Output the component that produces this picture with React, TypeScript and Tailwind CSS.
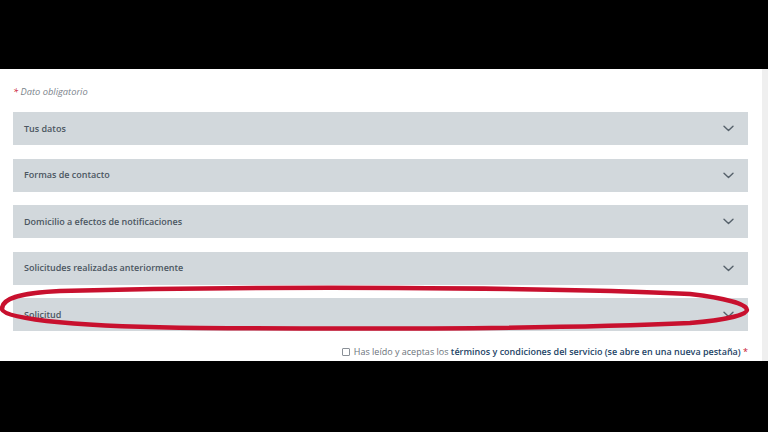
import React from 'react';

const sections = [
  'Tus datos',
  'Formas de contacto',
  'Domicilio a efectos de notificaciones',
  'Solicitudes realizadas anteriormente',
  'Solicitud',
];

const Chevron: React.FC = () => (
  <svg width="11" height="7" viewBox="0 0 11 7" fill="none">
    <path d="M1 1.2l4.5 4.3L10 1.2" stroke="#56616b" strokeWidth="1.4" strokeLinecap="round" strokeLinejoin="round" />
  </svg>
);

export default function App() {
  return (
    <div className="w-[768px] h-[432px] bg-black flex flex-col overflow-hidden" style={{ fontFamily: '"Open Sans", "Noto Sans", sans-serif' }}>
      <div className="h-[69px] shrink-0 bg-black" />

      <div className="relative h-[292px] shrink-0 bg-white flex">
        <div className="flex-1 pl-[13px] pr-[14px]">
          {/* Required note */}
          <p className="mt-[17px] h-[12px] text-[9.3px] leading-[12px] italic text-[#7b848c]">
            <span className="text-[#c8102e]">*</span> Dato obligatorio
          </p>

          {/* Accordion */}
          <div className="mt-[14px] flex flex-col gap-[13.5px]">
            {sections.map((title) => (
              <div key={title} className="h-[33px] bg-[#d2d8dc] flex items-center justify-between pl-[11px] pr-[14px]">
                <span className="text-[9px] font-semibold text-[#4b5661]">{title}</span>
                <Chevron />
              </div>
            ))}
          </div>

          {/* Terms */}
          <div className="mt-[15px] flex items-center justify-end gap-[4px] text-[9px] leading-[12px]">
            <span className="w-[8px] h-[8px] border border-[#8a9097] bg-white rounded-[1px]" />
            <span className="text-[#6b737b]">
              Has leído y aceptas los{' '}
              <span className="font-semibold text-[#1d4466]">términos y condiciones del servicio (se abre en una nueva pestaña)</span>{' '}
              <span className="text-[#c8102e]">*</span>
            </span>
          </div>
        </div>
        <div className="w-[6px] bg-[#efefef]" />

        {/* Hand-drawn highlight */}
        <svg className="absolute left-0 top-[214px] pointer-events-none" width="768" height="50" viewBox="0 0 768 50">
          <path
            d="M2 26 C 2 16, 18 10, 60 8 C 250 3, 560 4, 690 11 C 725 15, 747 21, 747 27 C 747 32, 725 37, 690 40 C 560 46, 350 46, 200 45 C 90 44, 2 37, 2 26 Z"
            fill="none"
            stroke="#c8102e"
            strokeWidth="4.5"
            strokeLinejoin="round"
          />
        </svg>
      </div>

      <div className="flex-1 bg-black" />
    </div>
  );
}
